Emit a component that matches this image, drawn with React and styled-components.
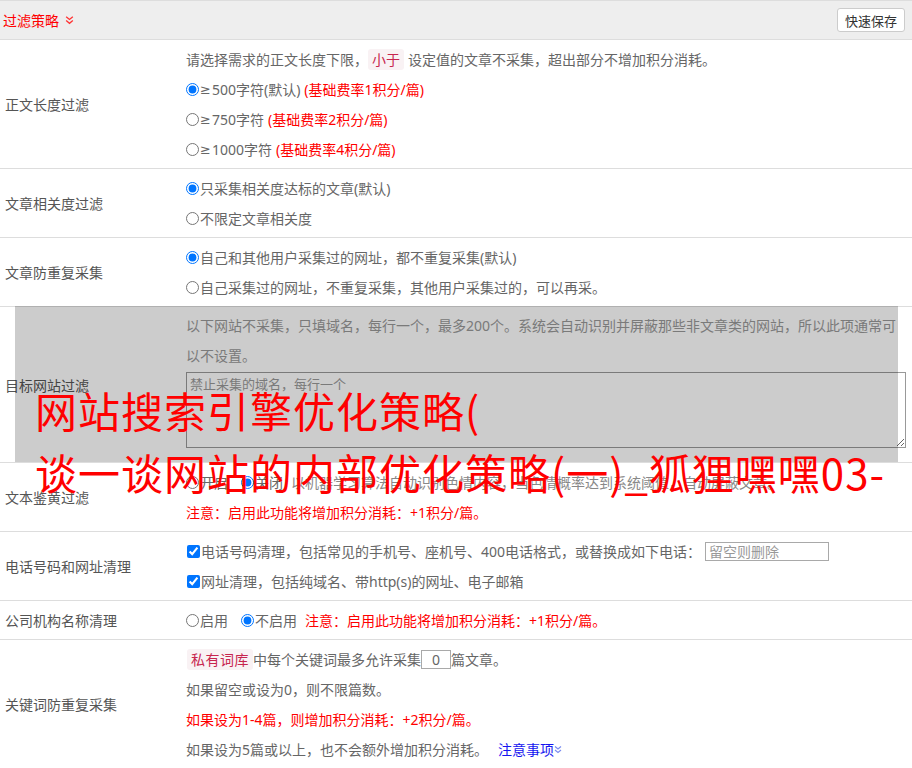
import styled, { createGlobalStyle } from "styled-components";

const GlobalStyle = createGlobalStyle`
  html, body {
    margin: 0;
    overflow: hidden;
    background: #fff;
  }
  body {
    font-family: "Noto Sans", "Noto Sans CJK SC", sans-serif;
    font-size: 14px;
    color: #666;
  }
`;

const Page = styled.div`
  position: relative;
  width: 912px;
  height: 768px;
  overflow: hidden;
`;

const Header = styled.div`
  display: flex;
  align-items: center;
  justify-content: space-between;
  height: 38px;
  padding: 0 7px 0 3px;
  background: #eee;
  border-top: 1px solid #ddd;
  border-bottom: 1px solid #ddd;
`;

const HeaderTitle = styled.div`
  display: flex;
  align-items: center;
  gap: 6px;
  color: #f00;
`;

const SaveButton = styled.button`
  height: 24px;
  padding: 0 7px;
  border: 1px solid #ccc;
  border-radius: 3px;
  background: #fff;
  font-family: inherit;
  font-size: 13px;
  color: #333;
`;

const Row = styled.div`
  position: relative;
  display: grid;
  grid-template-columns: 186px 1fr;
  border-bottom: 1px solid #ddd;
`;

const Label = styled.div`
  align-self: center;
  padding-left: 5px;
  color: #555;
`;

const Value = styled.div`
  padding: 4px 6px 4px 0;
  min-width: 0;
`;

const Line = styled.div`
  display: flex;
  align-items: center;
  height: 30px;
  white-space: nowrap;
  color: ${(p) => (p.$red ? "#f00" : "#666")};
`;

const Desc = styled.div`
  line-height: 30px;
  color: ${(p) => p.$color || "#666"};
`;

const Option = styled.label`
  display: inline-flex;
  align-items: center;
  margin-right: ${(p) => p.$gap || 0}px;
`;

const Radio = styled.input.attrs({ type: "radio" })`
  width: 13px;
  height: 13px;
  margin: 0 1px 0 0;
`;

const Check = styled.input.attrs({ type: "checkbox" })`
  width: 13px;
  height: 13px;
  margin: 0 1px 0 1px;
`;

const Sym = styled.span`
  font-family: "DejaVu Sans", sans-serif;
  font-size: 13px;
  margin-right: 1px;
`;

const Red = styled.span`
  color: #f00;
  margin-left: ${(p) => p.$ml || 0}px;
`;

const Muted = styled.span`
  color: #888;
`;

const Tag = styled.span`
  display: inline-block;
  padding: 0 4px;
  margin: 0 ${(p) => p.$mr || 0}px 0 ${(p) => p.$ml || 0}px;
  line-height: 21px;
  border-radius: 3px;
  background: #f9f2f4;
  color: #c7254e;
  letter-spacing: ${(p) => p.$spacing || 0}px;
`;

const TextInput = styled.input`
  box-sizing: border-box;
  width: ${(p) => p.$w}px;
  height: ${(p) => p.$h || 19}px;
  margin-left: ${(p) => p.$ml || 0}px;
  padding: 0 ${(p) => (p.$center ? 0 : 3)}px;
  border: 1px solid #a9a9a9;
  font-family: inherit;
  font-size: 14px;
  color: #666;
  text-align: ${(p) => (p.$center ? "center" : "left")};
  &::placeholder {
    color: #999;
  }
`;

const DomainBox = styled.textarea`
  display: block;
  box-sizing: border-box;
  width: 720px;
  height: 76px;
  margin: 1px 0 10px;
  padding: 2px 3px;
  border: 1px solid #999;
  font-family: inherit;
  font-size: 13px;
  line-height: 18px;
  &::placeholder {
    color: #999;
  }
`;

const Shade = styled.div`
  position: absolute;
  left: 15px;
  top: -1px;
  bottom: 0;
  width: 883px;
  background: rgba(0, 0, 0, 0.2);
  pointer-events: none;
`;

const BigTitle = styled.div`
  position: absolute;
  left: 35px;
  top: 379px;
  font-family: "Noto Sans CJK SC", sans-serif;
  font-size: 42px;
  line-height: 62px;
  letter-spacing: 1px;
  color: #f00;
  white-space: nowrap;
  pointer-events: none;
`;

const Link = styled.span`
  display: inline-flex;
  align-items: center;
  margin-left: 10px;
  color: #1515f0;
`;

const Chevrons = ({ color, size = 8 }) => (
  <svg width={size} height={size + 1} viewBox="0 0 8 9" fill="none" stroke={color} strokeWidth="1.2">
    <path d="M1 1.5 L4 4 L7 1.5" />
    <path d="M1 5 L4 7.5 L7 5" />
  </svg>
);

export default function App() {
  return (
    <Page>
      <GlobalStyle />
      <Header>
        <HeaderTitle>
          过滤策略
          <Chevrons color="#f33" size={9} />
        </HeaderTitle>
        <SaveButton>快速保存</SaveButton>
      </Header>

      <Row>
        <Label>正文长度过滤</Label>
        <Value>
          <Line>
            请选择需求的正文长度下限，<Tag $mr={4}>小于</Tag>设定值的文章不采集，超出部分不增加积分消耗。
          </Line>
          <Line>
            <Option><Radio name="len" defaultChecked /><Sym>≥</Sym>500字符(默认)</Option>
            <Red $ml={4}>(基础费率1积分/篇)</Red>
          </Line>
          <Line>
            <Option><Radio name="len" /><Sym>≥</Sym>750字符</Option>
            <Red $ml={4}>(基础费率2积分/篇)</Red>
          </Line>
          <Line>
            <Option><Radio name="len" /><Sym>≥</Sym>1000字符</Option>
            <Red $ml={4}>(基础费率4积分/篇)</Red>
          </Line>
        </Value>
      </Row>

      <Row>
        <Label>文章相关度过滤</Label>
        <Value>
          <Line><Option><Radio name="rel" defaultChecked />只采集相关度达标的文章(默认)</Option></Line>
          <Line><Option><Radio name="rel" />不限定文章相关度</Option></Line>
        </Value>
      </Row>

      <Row>
        <Label>文章防重复采集</Label>
        <Value>
          <Line><Option><Radio name="dup" defaultChecked />自己和其他用户采集过的网址，都不重复采集(默认)</Option></Line>
          <Line><Option><Radio name="dup" />自己采集过的网址，不重复采集，其他用户采集过的，可以再采。</Option></Line>
        </Value>
      </Row>

      <Row>
        <Label>目标网站过滤</Label>
        <Value>
          <Desc $color="#999">
            以下网站不采集，只填域名，每行一个，最多200个。系统会自动识别并屏蔽那些非文章类的网站，所以此项通常可以不设置。
          </Desc>
          <DomainBox placeholder="禁止采集的域名，每行一个" />
        </Value>
        <Shade />
      </Row>

      <Row>
        <Label>文本鉴黄过滤</Label>
        <Value>
          <Line>
            <Option $gap={13}><Radio name="porn" />开启</Option>
            <Option $gap={8}><Radio name="porn" defaultChecked />关闭</Option>
            <Muted>以机器学习算法自动识别色情内容，当色情概率达到系统阈值，自动屏蔽文章。</Muted>
          </Line>
          <Line $red>注意：启用此功能将增加积分消耗：+1积分/篇。</Line>
        </Value>
      </Row>

      <Row>
        <Label>电话号码和网址清理</Label>
        <Value>
          <Line>
            <Option><Check defaultChecked />电话号码清理，包括常见的手机号、座机号、400电话格式，或替换成如下电话：</Option>
            <TextInput $w={124} $ml={4} placeholder="留空则删除" />
          </Line>
          <Line>
            <Option><Check defaultChecked />网址清理，包括纯域名、带http(s)的网址、电子邮箱</Option>
          </Line>
        </Value>
      </Row>

      <Row>
        <Label>公司机构名称清理</Label>
        <Value>
          <Line>
            <Option $gap={13}><Radio name="org" />启用</Option>
            <Option $gap={8}><Radio name="org" defaultChecked />不启用</Option>
            <Red>注意：启用此功能将增加积分消耗：+1积分/篇。</Red>
          </Line>
        </Value>
      </Row>

      <Row>
        <Label>关键词防重复采集</Label>
        <Value>
          <Line>
            <Tag $ml={1} $spacing={0.5}>私有词库</Tag>
            中每个关键词最多允许采集
            <TextInput $w={30} $h={19} $center defaultValue="0" />
            篇文章。
          </Line>
          <Line>如果留空或设为0，则不限篇数。</Line>
          <Line $red>如果设为1-4篇，则增加积分消耗：+2积分/篇。</Line>
          <Line>
            如果设为5篇或以上，也不会额外增加积分消耗。
            <Link>
              注意事项
              <Chevrons color="#7a8cf0" />
            </Link>
          </Line>
        </Value>
      </Row>

      <BigTitle>
        <div>网站搜索引擎优化策略(</div>
        <div>谈一谈网站的内部优化策略(一)_狐狸嘿嘿03-</div>
      </BigTitle>
    </Page>
  );
}
